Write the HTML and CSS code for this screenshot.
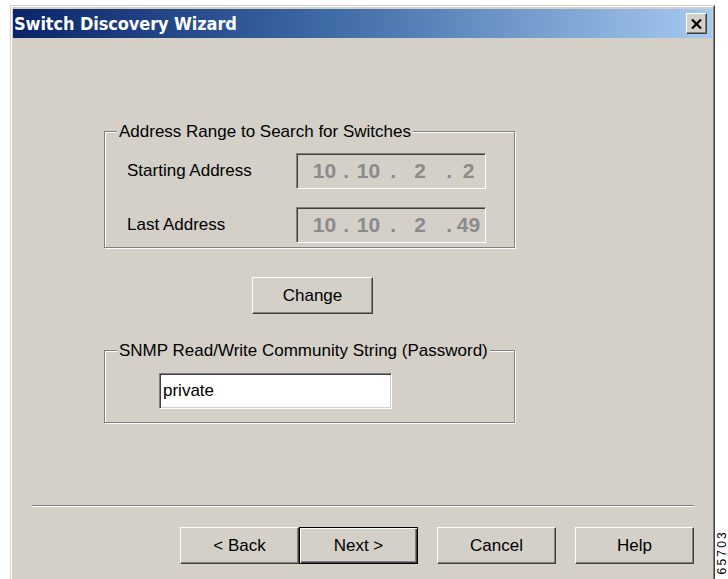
FILE: index.html
```html
<!DOCTYPE html>
<html lang="en">
<head>
<meta charset="utf-8">
<title>Switch Discovery Wizard</title>
<link rel="stylesheet" href="styles.css">
</head>
<body>
<div class="window">
  <div class="frame">
    <div class="titlebar">
      <span class="title">Switch Discovery Wizard</span>
      <button class="close" type="button" aria-label="Close">
        <svg width="11" height="10" viewBox="0 0 11 10"><path d="M1 0.5 L10 9.5 M10 0.5 L1 9.5" stroke="#000" stroke-width="2.2" fill="none"/></svg>
      </button>
    </div>
    <div class="client">
      <div class="pane">
        <div class="group range">
          <span class="group-title">Address Range to Search for Switches</span>
          <div class="row">
            <span class="label">Starting Address</span>
            <div class="field ip">
              <span class="oct">10</span><span class="dot">.</span><span class="oct">10</span><span class="dot">.</span><span class="oct">2</span><span class="dot">.</span><span class="oct">2</span>
            </div>
          </div>
          <div class="row">
            <span class="label">Last Address</span>
            <div class="field ip">
              <span class="oct">10</span><span class="dot">.</span><span class="oct">10</span><span class="dot">.</span><span class="oct">2</span><span class="dot">.</span><span class="oct">49</span>
            </div>
          </div>
        </div>
        <button class="btn change" type="button">Change</button>
        <div class="group community">
          <span class="group-title">SNMP Read/Write Community String (Password)</span>
          <div class="field text">private</div>
        </div>
      </div>
      <div class="separator"></div>
      <div class="actions">
        <button class="btn" type="button">&lt; Back</button>
        <button class="btn default" type="button">Next &gt;</button>
        <button class="btn spaced" type="button">Cancel</button>
        <button class="btn spaced" type="button">Help</button>
      </div>
    </div>
  </div>
</div>
<span class="figure-id">65703</span>
</body>
</html>
```
FILE: styles.css
```css
* { box-sizing: border-box; }

html, body {
  margin: 0;
  height: 100%;
}

body {
  background: #fff;
  overflow: hidden;
  position: relative;
  font-family: "Liberation Sans", Arial, sans-serif;
  font-size: 17px;
  color: #000;
}

/* classic 3D window frame (continues below the visible area) */
.window {
  margin: 5px 0 0 10px;
  width: 705px;
  height: 574px;
  border: 1px solid;
  border-bottom-width: 0;
  border-color: #d4d0c8 #404040 #404040 #d4d0c8;
}

.frame {
  height: 100%;
  border: 1px solid;
  border-bottom-width: 0;
  border-color: #fff #808080 #808080 #fff;
  padding: 2px 1px 0 1px;
  background: #d4d0c8;
  display: flex;
  flex-direction: column;
}

.titlebar {
  height: 29px;
  flex: none;
  display: flex;
  align-items: center;
  justify-content: space-between;
  padding: 0 5px 0 1px;
  background: linear-gradient(to right, #0a246a 0%, #3e6aa6 45%, #a6caf0 100%);
}

.title {
  color: #fff;
  font-family: "DejaVu Sans Condensed", "DejaVu Sans", sans-serif;
  font-weight: bold;
  font-size: 18px;
  letter-spacing: -0.1px;
}

.close {
  width: 21px;
  height: 21px;
  padding: 0;
  display: flex;
  align-items: center;
  justify-content: center;
  background: #d4d0c8;
  border: 1px solid;
  border-color: #fff #404040 #404040 #fff;
  box-shadow: inset -1px -1px #808080;
}

.client {
  flex: 1;
  display: flex;
  flex-direction: column;
}

.pane {
  padding: 93px 0 0 91px;
  display: flex;
  flex-direction: column;
  align-items: flex-start;
}

/* etched group box */
.group {
  position: relative;
  width: 411px;
  border: 1px solid #808080;
  box-shadow: inset 1px 1px #fff, 1px 1px #fff;
}

.group-title {
  position: absolute;
  top: -10px;
  left: 12px;
  padding: 0 2px;
  line-height: 19px;
  background: #d4d0c8;
}

.range {
  height: 117px;
  padding: 21px 0 0 22px;
  display: flex;
  flex-direction: column;
  gap: 18px;
}

.row {
  display: flex;
  align-items: center;
}

.label {
  width: 169px;
}

/* sunken edit field */
.field {
  border: 1px solid;
  border-color: #808080 #fff #fff #808080;
  box-shadow: inset 1px 1px #404040, inset -1px -1px #d4d0c8;
}

.ip {
  width: 190px;
  height: 36px;
  display: grid;
  grid-template-columns: 33px 8px 39px 8px 48px 8px 33px;
  align-items: center;
  padding-left: 11px;
  color: #8b8b8b;
  font-size: 21px;
  font-weight: bold;
}

.oct { text-align: center; }
.dot { text-align: right; }

.btn {
  font: inherit;
  color: #000;
  background: #d4d0c8;
  border: 1px solid;
  border-color: #fff #404040 #404040 #fff;
  box-shadow: inset -1px -1px #808080;
  padding: 0;
}

.change {
  width: 121px;
  height: 37px;
  margin: 29px 0 0 148px;
}

.community {
  margin-top: 36px;
  height: 73px;
  padding: 22px 0 0 54px;
}

.text {
  width: 233px;
  height: 36px;
  background: #fff;
  display: flex;
  align-items: center;
  padding-left: 3px;
}

.separator {
  margin: 82px 0 0 19px;
  width: 662px;
  height: 2px;
  border-top: 1px solid #808080;
  border-bottom: 1px solid #fff;
}

.actions {
  margin-top: 20px;
  padding-right: 18px;
  display: flex;
  justify-content: flex-end;
}

.actions .btn {
  width: 119px;
  height: 37px;
}

.actions .spaced { margin-left: 19px; }

.actions .default {
  border-color: #000;
  box-shadow: inset 1px 1px #fff, inset -1px -1px #404040, inset -2px -2px #808080;
}

/* figure number printed along the right margin */
.figure-id {
  position: absolute;
  left: 716px;
  top: 530px;
  writing-mode: vertical-rl;
  transform: rotate(180deg);
  font-size: 12px;
  letter-spacing: 2.2px;
  line-height: 12px;
}
```
